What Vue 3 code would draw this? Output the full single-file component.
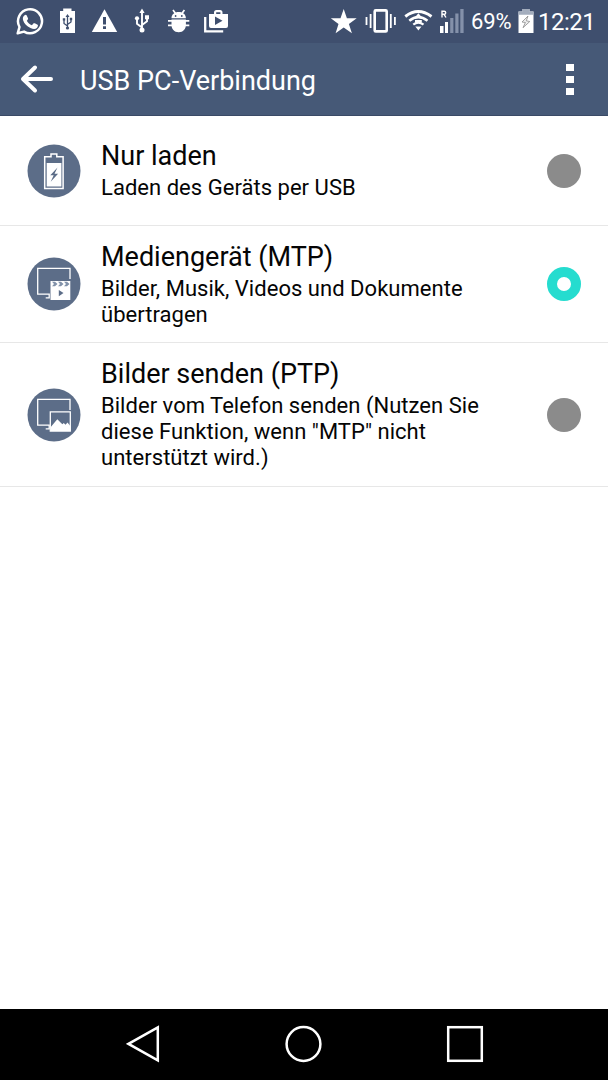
<script setup>
import { ref } from 'vue'

const selected = ref('mtp')
const modes = [
  { id: 'charge', title: 'Nur laden', lines: ['Laden des Geräts per USB'] },
  { id: 'mtp', title: 'Mediengerät (MTP)', lines: ['Bilder, Musik, Videos und Dokumente', 'übertragen'] },
  { id: 'ptp', title: 'Bilder senden (PTP)', lines: ['Bilder vom Telefon senden (Nutzen Sie', 'diese Funktion, wenn "MTP" nicht', 'unterstützt wird.)'] },
]
</script>

<template>
  <div class="phone">
    <div class="status">
      <div class="notifications">
        <!-- WhatsApp -->
        <svg width="42" height="43" viewBox="16 0 42 43">
          <path d="M17.700 33.300 L19.500 27 A12 12 0 1 1 24 31.600 Z" fill="none" stroke="#fff" stroke-width="2.500" stroke-linejoin="round" />
          <path d="M24.600 15.200c.6-.6 1.500-.7 2 .1l1.400 2.900c.3.8-.1 1.300-1.200 2.500 1.200 2.300 2.800 3.800 5.100 4.600l1.500-1.700c.4-.5.9-.5 1.400-.3l2.800 1.500c.7.4.3 2-.5 2.900-1.500 1.500-3.800 1.600-6.600.3-3.800-1.800-6.300-4.700-7.300-7.600-.7-2.100-.3-3.800 1.400-5.200z" fill="#fff" />
        </svg>
        <!-- USB charging battery -->
        <svg width="33" height="43" viewBox="58 0 33 43">
          <path d="M60 11h3.200V8.600h8.300V11H75v22H60z" fill="#fff" />
          <path d="M67.500 17v11M67.500 26l-3.500-2.500v-4M67.500 24.500l3.500-2.500v-3" fill="none" stroke="#3f4f6e" stroke-width="1.300" />
          <path d="M67.500 14l2 3h-4zM62.800 18.200h2.400v2.400h-2.400zM69.800 17.800h2.400v2.400h-2.400z" fill="#3f4f6e" />
          <circle cx="67.500" cy="28" r="1.600" fill="#3f4f6e" />
        </svg>
        <!-- Warning -->
        <svg width="43" height="43" viewBox="91 0 43 43">
          <path d="M104.500 9.200L117.200 32H91.800z" fill="#fff" />
          <path d="M103 17h3v7.500h-3zM103 26.300h3v2.700h-3z" fill="#3f4f6e" />
        </svg>
        <!-- USB -->
        <svg width="33" height="43" viewBox="134 0 33 43">
          <path d="M142 12v18M142 27.500l-5-3.700v-4.500M142 25l5-3.700v-4" fill="none" stroke="#fff" stroke-width="1.900" />
          <path d="M142 8.500l2.600 4.500h-5.200zM145 15.200h4v4h-4z" fill="#fff" />
          <circle cx="137" cy="18.300" r="2.100" fill="#fff" /><circle cx="142" cy="30" r="2.500" fill="#fff" />
        </svg>
        <!-- Debugging bug -->
        <svg width="36" height="43" viewBox="167 0 36 43">
          <path d="M171.500 18.200c0-3.600 3-6.100 7.200-6.100s7.200 2.500 7.200 6.100zM171.500 19.600h14.400v5c0 4.600-2.700 7.700-7.200 7.700s-7.200-3.100-7.200-7.700z" fill="#fff" />
          <path d="M173 10l2.500 3.400M184.400 10l-2.500 3.400M168 20.800h21.300M168 25.300h21.300" stroke="#fff" stroke-width="1.700" />
          <circle cx="175.600" cy="16" r=".9" fill="#3f4f6e" /><circle cx="181.800" cy="16" r=".9" fill="#3f4f6e" />
        </svg>
        <!-- Play store -->
        <svg width="30" height="43" viewBox="203 0 30 43">
          <path d="M205.200 17v14.300h18" fill="none" stroke="#fff" stroke-width="2.300" />
          <path d="M209 14h5v-1.500q0-2.500 2.500-2.500h3.500q2.500 0 2.500 2.500V14h5.500v12q0 2-2 2h-15q-2 0-2-2zM216.200 12.300V14h4.200v-1.700z" fill="#fff" fill-rule="evenodd" />
          <path d="M215 16.500v8.500l7.500-4.300z" fill="#3f4f6e" />
        </svg>
      </div>
      <div class="indicators">
        <svg width="35" height="43" viewBox="330 0 35 43">
          <path d="M343.700 9l3.200 9.200h9.800l-7.800 5.700 3 9.400-8.200-5.700-8.100 5.700 2.900-9.400-7.700-5.700h9.700z" fill="#fff" />
        </svg>
        <svg width="38" height="43" viewBox="365 0 38 43">
          <rect x="374.700" y="10.400" width="12" height="21" rx="1" fill="none" stroke="#fff" stroke-width="2.600" />
          <path d="M366.500 17v8M370.600 14v14M390.800 14v14M394.900 17v8" stroke="#fff" stroke-width="1.800" />
        </svg>
        <svg width="36" height="43" viewBox="403 0 36 43">
          <g fill="none" stroke="#fff">
            <path d="M405.300 16.500q12.800-9.800 26.200 0" stroke-width="2.900" />
            <path d="M409.300 20.700q9-7.200 18.200 0" stroke-width="2.600" />
            <path d="M413.300 24.600q5-4 10.200 0" stroke-width="2.300" />
          </g>
          <path d="M418.400 13.300l3.400 3.900h-6.800zM415 20h6.800v2h-6.800zM415.300 26.600h6.200l-3.100 3.800z" fill="#fff" />
          <path d="M414.500 19.500h7.700M414.500 25.600h7.700" stroke="#3f4f6e" stroke-width=".8" />
        </svg>
        <svg width="32" height="43" viewBox="439 0 32 43">
          <path d="M442 17.500v-6.300h2.200q1.500 0 1.500 1.500t-1.500 1.600H442m2 0l2 3.200" fill="none" stroke="#fff" stroke-width="1.400" />
          <path d="M440 26h3.500v7H440zM445 22h3v11h-3z" fill="#fff" />
          <path d="M450.200 18h3.200v15h-3.200zM455.300 13.500h3.200V33h-3.200zM460.300 9h3.300v24h-3.300z" fill="#8491aa" />
        </svg>
        <span class="percent">69%</span>
        <svg width="20" height="43" viewBox="518 0 20 43">
          <path d="M518.500 11.500h4V9h7v2.500h4V33h-15z" fill="#fff" />
          <path d="M518.500 11.500h4V9h7v2.500h4v3.200h-15z" fill="#a3adbd" />
          <path d="M528 16l-6 6 3.400.5-2.400 5.200 6.800-6.200-3.500-.7z" fill="#eee" stroke="#8b8b8b" stroke-width=".8" />
        </svg>
        <span class="clock">12:21</span>
      </div>
    </div>

    <header class="bar">
      <svg class="back" width="34" height="30" viewBox="0 0 34 30">
        <path d="M15 3.500L3 15l12 11.500M4 15h27" fill="none" stroke="#fff" stroke-width="4" stroke-linecap="round" stroke-linejoin="round" />
      </svg>
      <h1>USB PC-Verbindung</h1>
      <div class="more"><i></i><i></i><i></i></div>
    </header>

    <main>
      <div v-for="mode in modes" :key="mode.id" class="row" :class="mode.id" @click="selected = mode.id">
        <svg class="icon" width="54" height="54" viewBox="0 0 54 54">
          <circle cx="27" cy="27" r="26.500" fill="#5c6d88" />
          <g v-if="mode.id === 'charge'">
            <path d="M17.700 12.800h6.300V10h5.800v2.800h6.300v31.600H17.700z" fill="none" stroke="#fff" stroke-width="1.500" />
            <path d="M19.700 19h14.700v23.500H19.700z" fill="#fff" />
            <path d="M30.500 23.500l-7.200 7.700h3.400l-3 6.500 7.400-8h-3.600z" fill="#5c6d88" />
          </g>
          <g v-else>
            <path d="M43 22V11.300H10.700v25.900h11.500v3.600h-3.500" fill="none" stroke="#fff" stroke-width="1.300" />
            <template v-if="mode.id === 'mtp'">
              <path d="M23.500 24h19.800v19H23.500z" fill="#fff" />
              <path d="M25 24.700h3l2.500 2.300-2.500 2.300h-3l2-2.300zM31 24.700h3l2.500 2.300-2.500 2.300h-3l2-2.300zM37 24.700h3l2.500 2.300-2.500 2.300h-3l2-2.300z" fill="#8292aa" />
              <path d="M31.800 33v6.200l4.700-3.100z" fill="#5c6d88" />
            </template>
            <template v-else>
              <path d="M23.300 23.800h20v19.400h-20z" fill="#5c6d88" stroke="#fff" stroke-width="1.300" />
              <path d="M24 38.800l6.300-7.500 5 5 1.500-1.300 1.700 1.800 2-2.300 3 3.700V43H24z" fill="#fff" />
            </template>
          </g>
        </svg>
        <div class="copy">
          <h2>{{ mode.title }}</h2>
          <p v-for="line in mode.lines" :key="line">{{ line }}</p>
        </div>
        <span class="radio" :class="{ on: selected === mode.id }"></span>
      </div>
    </main>

    <nav>
      <svg width="34" height="38" viewBox="0 0 34 38"><path d="M31.800 2.500v32.800L2.500 18.900z" /></svg>
      <svg width="38" height="38" viewBox="0 0 38 38"><circle cx="19.500" cy="19" r="16.900" /></svg>
      <svg width="38" height="38" viewBox="0 0 38 38"><rect x="2.200" y="2.200" width="33.600" height="33.600" /></svg>
    </nav>
  </div>
</template>

<style>
body { margin: 0; background: #fff; }
</style>

<style scoped>
.phone {
  width: 608px;
  height: 1080px;
  display: flex;
  flex-direction: column;
  background: #fff;
  color: #050505;
  font-family: Roboto, "Noto Sans", sans-serif;
  overflow: hidden;
}
svg { display: block; flex: none; }
h1, h2, p { margin: 0; font-weight: 400; white-space: nowrap; }
.status {
  height: 43px;
  flex: none;
  display: flex;
  justify-content: space-between;
  padding: 0 0 0 16px;
  box-sizing: border-box;
  background: #3f4f6e;
  color: #fff;
}
.notifications, .indicators { display: flex; }
.indicators { width: 278px; }
.percent, .clock { line-height: 44px; white-space: nowrap; flex: none; }
.percent { width: 47px; font-size: 22px; letter-spacing: -0.1px; }
.clock { font-size: 24px; letter-spacing: -0.500px; }
.bar {
  height: 73px;
  flex: none;
  box-sizing: border-box;
  display: flex;
  align-items: center;
  padding: 0 34px 0 20px;
  background: #465977;
  border-bottom: 1px solid #3a4a66;
  color: #fff;
}
.back { margin-right: 26px; }
h1 { font-size: 27px; line-height: 32px; margin-top: 3px; flex: 1; }
.more { display: grid; gap: 5px; }
.more i { width: 8px; height: 7px; background: #fff; }
main { flex: 1; }
.row {
  display: flex;
  align-items: center;
  box-sizing: border-box;
  padding: 0 27px;
  border-bottom: 1px solid #e7e7e7;
}
.charge { height: 110px; }
.mtp { height: 117px; }
.ptp { height: 144px; }
.copy { flex: 1; margin-left: 20px; }
.mtp .copy { padding-top: 1px; }
h2 { font-size: 27px; line-height: 30px; padding-bottom: 4px; }
p { font-size: 22px; line-height: 26px; letter-spacing: 0.03px; }
.radio { width: 34px; height: 34px; border-radius: 50%; background: #8b8b8b; }
.radio.on { box-sizing: border-box; border: 10px solid #25dccf; background: #fff; }
nav {
  height: 71px;
  flex: none;
  box-sizing: border-box;
  padding: 0 124px 1px 126px;
  display: flex;
  align-items: center;
  justify-content: space-between;
  background: #000;
}
nav svg { fill: none; stroke: #fff; stroke-width: 2.500; }
</style>
